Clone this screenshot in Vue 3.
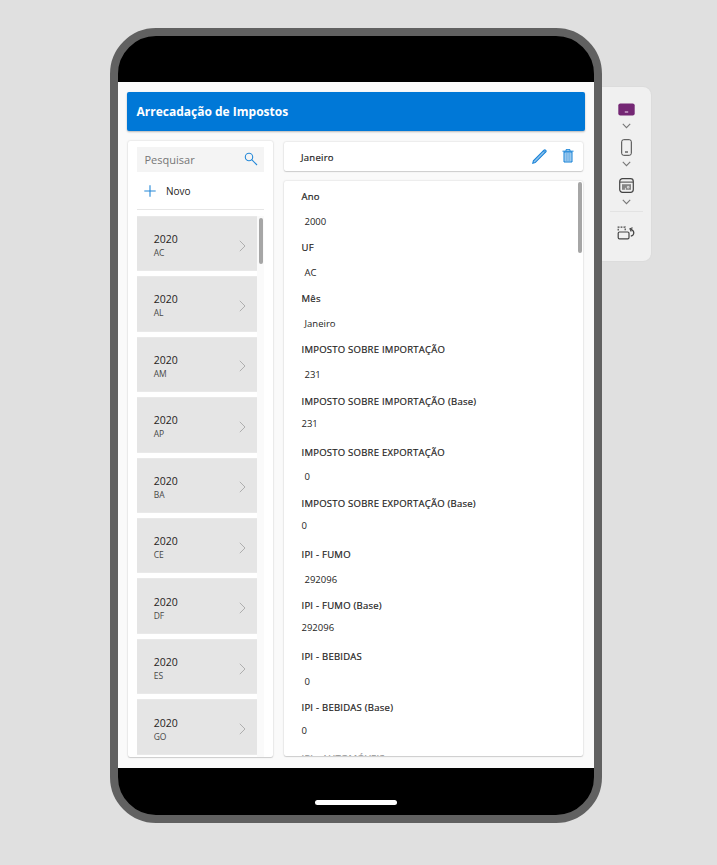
<script setup>
const states = ['AC', 'AL', 'AM', 'AP', 'BA', 'CE', 'DF', 'ES', 'GO']
const fields = [
  { label: 'Ano', value: '2000' },
  { label: 'UF', value: 'AC' },
  { label: 'Mês', value: 'Janeiro' },
  { label: 'IMPOSTO SOBRE IMPORTAÇÃO', value: '231' },
  { label: 'IMPOSTO SOBRE IMPORTAÇÃO (Base)', value: '231', base: true },
  { label: 'IMPOSTO SOBRE EXPORTAÇÃO', value: '0' },
  { label: 'IMPOSTO SOBRE EXPORTAÇÃO (Base)', value: '0', base: true },
  { label: 'IPI - FUMO', value: '292096' },
  { label: 'IPI - FUMO (Base)', value: '292096', base: true },
  { label: 'IPI - BEBIDAS', value: '0' },
  { label: 'IPI - BEBIDAS (Base)', value: '0', base: true },
]
</script>

<template>
  <main class="stage">
    <section class="device">
      <div class="app">
        <header class="title">Arrecadação de Impostos</header>
        <div class="columns">
          <aside class="panel browse">
            <div class="search">
              <span>Pesquisar</span>
              <svg width="14" height="14" viewBox="0 0 14 14" fill="none" stroke="#2488d8" stroke-width="1.1">
                <circle cx="5" cy="5" r="3.7" />
                <path d="M7.7 7.7 13 13" />
              </svg>
            </div>
            <div class="new">
              <svg width="12" height="12" viewBox="0 0 12 12" fill="none" stroke="#2488d8" stroke-width="1.1">
                <path d="M6 .3v11.4M.3 6h11.4" />
              </svg>
              <span>Novo</span>
            </div>
            <div class="gallery">
              <div class="items">
                <div v-for="s in states" :key="s" class="item">
                  <div class="item-text">
                    <span class="year">2020</span>
                    <span class="uf">{{ s }}</span>
                  </div>
                  <svg width="7" height="12" viewBox="0 0 7 12" fill="none" stroke="#a8a8a8" stroke-width="0.9">
                    <path d="M.8.8 6 6 .8 11.2" />
                  </svg>
                </div>
              </div>
              <div class="track"><div class="thumb"></div></div>
            </div>
          </aside>

          <div class="detail">
            <div class="panel record">
              <span>Janeiro</span>
              <svg class="pencil" width="15" height="15" viewBox="0 0 15 15">
                <path d="M.8 14.2 1.4 11.8 12 1.2Q12.9.5 13.7 1.3 14.5 2.1 13.8 3L3.2 13.6Z" fill="#8fc2ec" stroke="#1a84d8" stroke-width="1.1" />
                <path d="M11.4 1.9l1.7 1.7" stroke="#1a84d8" />
              </svg>
              <svg class="trash" width="12" height="14" viewBox="0 0 12 14">
                <path d="M2 3h8v10H2z" fill="#b5d6f2" stroke="#0f7fd6" />
                <path d="M.5 2.2h11M4 1.9V.7h4v1.2" fill="none" stroke="#0f7fd6" />
                <path d="M4.2 4v8M6 4v8M7.8 4v8" stroke="#4b9fe0" stroke-width=".8" />
              </svg>
            </div>
            <div class="panel form">
              <div class="fields">
                <div v-for="f in fields" :key="f.label" class="field">
                  <div class="label">{{ f.label }}</div>
                  <div class="value" :class="{ base: f.base }">{{ f.value }}</div>
                </div>
                <div class="field last"><div class="label">IPI - AUTOMÓVEIS</div></div>
              </div>
              <div class="form-thumb"></div>
            </div>
          </div>
        </div>
      </div>
      <div class="bottom"><div class="home"></div></div>
    </section>

    <nav class="tools">
      <svg width="17" height="13" viewBox="0 0 17 13">
        <rect x=".3" y=".4" width="16.4" height="12.2" rx="2" fill="#742774" />
        <path d="M6.8 9h3.4" stroke="#d7b5d7" stroke-width="1.3" />
      </svg>
      <svg class="chev" width="9" height="6" viewBox="0 0 9 6"><path d="M.8.9 4.5 4.6 8.2.9" /></svg>
      <svg class="phone" width="11" height="17" viewBox="0 0 11 17" fill="none" stroke="#444">
        <rect x=".7" y=".7" width="9.6" height="15.6" rx="2" />
        <path d="M4 13h3" stroke-width="1.2" />
      </svg>
      <svg class="chev" width="9" height="6" viewBox="0 0 9 6"><path d="M.8.9 4.5 4.6 8.2.9" /></svg>
      <svg class="window" width="15" height="15" viewBox="0 0 15 15" fill="none" stroke="#444">
        <rect x=".7" y=".7" width="13.6" height="13.6" rx="2.8" stroke-width="1.2" />
        <path d="M1 4.1h13" />
        <path d="M3 6.2h9v5.6H3z" fill="#858585" stroke="none" />
        <path d="M6.4 12V9.8M8.4 8.4h1.6v1.6H8.4z" stroke="#eee" stroke-width=".8" />
      </svg>
      <svg class="chev" width="9" height="6" viewBox="0 0 9 6"><path d="M.8.9 4.5 4.6 8.2.9" /></svg>
      <div class="rule"></div>
      <svg class="rotate" width="18" height="14" viewBox="0 0 18 14" fill="none" stroke="#444" stroke-width="1.2">
        <rect x="1.2" y="6" width="10.8" height="6.8" rx="1.3" />
        <path d="M1.2 4.6V1.2h7v3.4" stroke-dasharray="1.8 1.1" />
        <path d="M13.8 10.2c3.6-.8 4.4-5.2 0-7" />
        <path d="M15.6 1.8 13 2.8 14.2 5.4" />
      </svg>
    </nav>
  </main>
</template>

<style>
body {
  background: #e0e0e0;
}
</style>

<style scoped>
.stage {
  box-sizing: border-box;
  width: 717px;
  height: 865px;
  padding: 27.5px 0 0 109.5px;
  display: flex;
  align-items: flex-start;
  overflow: hidden;
  background: #e0e0e0;
  font-family: "Open Sans", "Noto Sans", sans-serif;
  color: #252423;
}
.stage * {
  box-sizing: border-box;
}
svg {
  display: block;
  flex: none;
}
.device {
  width: 492.5px;
  height: 795px;
  flex: none;
  border: 8px solid #616161;
  border-radius: 46px;
  background: #000;
  padding-top: 46.5px;
  overflow: hidden;
}
.app {
  height: 686px;
  background: #fafafa;
  padding: 9.5px 9px 0 9.5px;
}
.title {
  height: 39.5px;
  border-radius: 2px;
  background: #0078d7;
  box-shadow: 0 1px 2px #0004;
  color: #fff;
  font-size: 12px;
  font-weight: 700;
  line-height: 40px;
  padding-left: 9.5px;
}
.columns {
  display: flex;
  gap: 11px;
  padding: 9.5px 2px 0 1px;
}
.panel {
  background: #fff;
  border-radius: 2px;
  box-shadow: 0 0 2px #0003, 0 1px 1px #0002;
}
.browse {
  width: 145px;
  height: 616.5px;
  padding: 6px 9px 0;
  overflow: hidden;
}
.search {
  height: 25px;
  background: #f4f4f4;
  display: flex;
  align-items: center;
  justify-content: space-between;
  padding: 0 6px 0 7.5px;
  font-size: 11px;
  color: #767676;
}
.new {
  height: 38px;
  display: flex;
  align-items: center;
  gap: 10px;
  padding: 1.5px 0 0 7px;
  font-size: 10px;
  border-bottom: 1px solid #e6e6e6;
}
.gallery {
  display: flex;
  height: 542px;
  margin-top: 6.3px;
}
.items {
  width: 120px;
  display: flex;
  flex-direction: column;
  gap: 5px;
}
.item {
  flex: none;
  height: 55.45px;
  display: flex;
  align-items: center;
  justify-content: space-between;
  padding: 4px 11.5px 0 16.7px;
  background: #e5e5e5;
  border: 1px solid #e9e9e9;
  border-width: 1px 0;
}
.item-text {
  display: flex;
  flex-direction: column;
}
.year {
  font-size: 10.5px;
  line-height: 14px;
}
.uf {
  font-size: 8.5px;
  line-height: 13px;
  color: #484848;
}
.track {
  flex: 1;
  background: #fafafa;
  padding: 2px 1px 0 2px;
}
.thumb {
  width: 3.5px;
  height: 46px;
  border-radius: 2px;
  background: #a6a6a6;
}
.detail {
  flex: 1;
  display: flex;
  flex-direction: column;
  gap: 9.5px;
  padding-top: 1px;
}
.record {
  height: 29.5px;
  display: flex;
  align-items: center;
  padding: 0 9px 0 17px;
  font-size: 9.5px;
  font-weight: 500;
  letter-spacing: 0.25px;
  -webkit-text-stroke: 0.2px #252423;
}
.record span {
  padding-top: 2.5px;
}
.pencil {
  margin-left: auto;
}
.trash {
  margin-left: 15px;
}
.form {
  height: 575.5px;
  display: flex;
  padding: 1.5px 1px 0 17.5px;
  overflow: hidden;
}
.fields {
  flex: 1;
}
.field {
  height: 51.15px;
  padding-top: 7px;
}
.label {
  font-size: 9.5px;
  font-weight: 500;
  letter-spacing: 0.25px;
  line-height: 15px;
  -webkit-text-stroke: 0.2px currentColor;
}
.value {
  font-size: 9.5px;
  line-height: 15px;
  padding: 9.7px 0 0 3px;
}
.value.base {
  padding: 7.2px 0 0;
}
.last {
  padding-top: 6px;
}
.last .label {
  color: #999;
}
.form-thumb {
  width: 4px;
  height: 71px;
  border-radius: 2px;
  background: #a6a6a6;
}
.tools {
  width: 48.5px;
  height: 174px;
  margin-top: 59.5px;
  padding-top: 15.5px;
  background: #f0f0f0;
  border-radius: 0 8px 8px 0;
  box-shadow: 0 0 2px #0001;
  display: flex;
  flex-direction: column;
  align-items: center;
}
.chev {
  fill: none;
  stroke: #777;
  stroke-width: 1.1;
  margin-top: 7.5px;
}
.phone {
  margin-top: 9.5px;
}
.phone + .chev {
  margin-top: 5.5px;
}
.window {
  margin-top: 10.5px;
}
.window + .chev {
  margin-top: 6.5px;
}
.rule {
  width: 33px;
  height: 1px;
  margin-top: 6px;
  background: #e3e3e3;
}
.rotate {
  margin-top: 13.5px;
}
.bottom {
  height: 46.5px;
  display: flex;
  justify-content: center;
  padding-top: 32px;
}
.home {
  width: 82px;
  height: 5px;
  border-radius: 3px;
  background: #fff;
}
</style>
